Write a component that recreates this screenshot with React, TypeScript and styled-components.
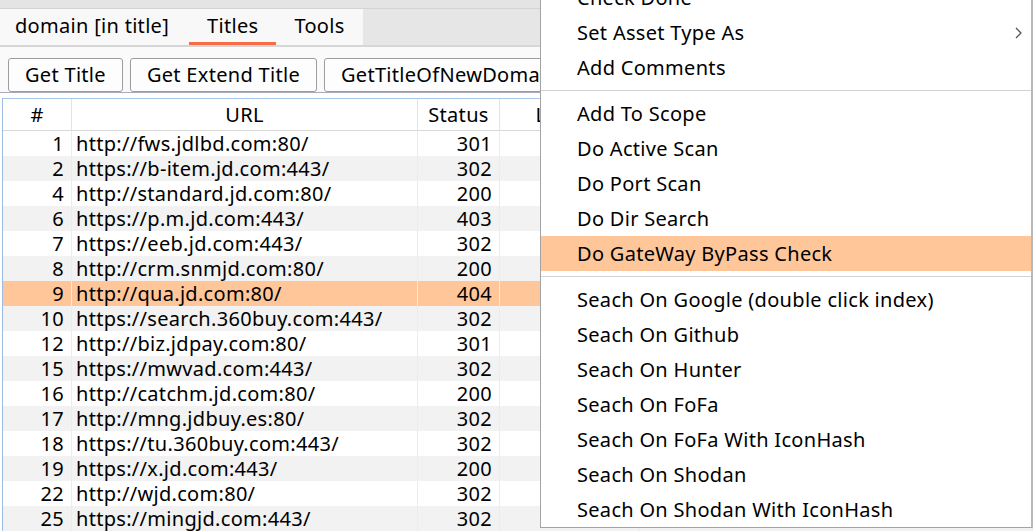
import React from "react";
import styled, { createGlobalStyle } from "styled-components";

const GlobalStyle = createGlobalStyle`
  html, body {
    margin: 0;
    padding: 0;
    overflow: hidden;
    background: #ffffff;
  }
  body {
    font-family: "Noto Sans", "Open Sans", sans-serif;
    color: #000;
  }
`;

const Window = styled.div`
  position: relative;
  width: 1033px;
  height: 531px;
  overflow: hidden;
  background: #ffffff;
  font-size: 20px;
  letter-spacing: 0.3px;
`;

const TopStrip = styled.div`
  height: 8px;
  background: #e4e4e4;
  border-bottom: 1px solid #d3d3d3;
`;

const TabBar = styled.div`
  display: flex;
  height: 36px;
  background: #e6e6e6;
  border-bottom: 2px solid #d6d6d6;
`;

const Tabs = styled.div`
  display: flex;
  background: #f8f8f8;
`;

const Tab = styled.div<{ $active?: boolean; $first?: boolean }>`
  display: flex;
  align-items: center;
  padding-left: ${(p) => (p.$first ? "15px" : "18px")};
  padding-right: ${(p) => (p.$first ? "20px" : "18px")};
  box-sizing: border-box;
  height: 36px;
  border-bottom: 3px solid ${(p) => (p.$active ? "#f76b45" : "transparent")};
  line-height: 1.2;
`;

const Toolbar = styled.div`
  display: flex;
  gap: 7px;
  height: 46px;
  padding: 11px 0 0 8px;
  box-sizing: border-box;
  background: #fafafa;
  border-bottom: 1px solid #aaaabb;
  white-space: nowrap;
`;

const Button = styled.div`
  display: flex;
  align-items: center;
  height: 34px;
  padding: 0 16px;
  box-sizing: border-box;
  background: #fdfdfd;
  border: 1px solid #9d9d9d;
  border-radius: 3px;
  line-height: 1.2;
`;

const TablePane = styled.div`
  padding: 5px 0 0 2px;
  background: #ffffff;
`;

const Table = styled.div`
  border-left: 1px solid #9dbbe0;
`;

const columns = "69px 346px 82px 140px 1fr";

const HeaderRow = styled.div`
  display: grid;
  grid-template-columns: ${columns};
  height: 33px;
  box-sizing: border-box;
  border-top: 1px solid #a9c7ea;
  border-bottom: 1px solid #d8d8d8;
  background: #ffffff;
`;

const HeaderCell = styled.div`
  display: flex;
  align-items: center;
  justify-content: center;
  border-right: 1px solid #e4e4e4;
  line-height: 1.2;
  white-space: nowrap;
`;

const Row = styled.div<{ $shade: "plain" | "alt" | "selected" }>`
  display: grid;
  grid-template-columns: ${columns};
  height: 25px;
  background: ${(p) =>
    p.$shade === "selected" ? "#ffc699" : p.$shade === "alt" ? "#f2f2f2" : "#ffffff"};
  white-space: nowrap;
`;

const Cell = styled.div<{ $align?: "left" | "right" }>`
  display: flex;
  align-items: center;
  justify-content: ${(p) => (p.$align === "right" ? "flex-end" : "flex-start")};
  padding: 1px ${(p) => (p.$align === "right" ? "7px" : "4px")} 0;
  border-right: 1px solid #ececec;
  min-width: 0;
  line-height: 1.2;
`;

const Menu = styled.div`
  position: absolute;
  left: 540px;
  top: -21px;
  width: 493px;
  box-sizing: border-box;
  background: #ffffff;
  border: 1px solid #a3a3a3;
  border-right-width: 2px;
  border-right-color: #b8b8b8;
`;

const MenuItem = styled.div<{ $hover?: boolean }>`
  position: relative;
  display: flex;
  align-items: center;
  height: 35px;
  padding-left: 36px;
  background: ${(p) => (p.$hover ? "#ffc699" : "transparent")};
  line-height: 1.2;
  white-space: nowrap;
`;

const SubArrow = styled.svg`
  position: absolute;
  right: 9px;
  top: 12px;
`;

const Separator = styled.div`
  height: 11px;
  display: flex;
  align-items: center;
  &::after {
    content: "";
    flex: 1;
    height: 1px;
    background: #d3d3d3;
  }
`;

type Item = { label: string; arrow?: boolean; hover?: boolean } | "sep";

const menuItems: Item[] = [
  { label: "Check Done" },
  { label: "Set Asset Type As", arrow: true },
  { label: "Add Comments" },
  "sep",
  { label: "Add To Scope" },
  { label: "Do Active Scan" },
  { label: "Do Port Scan" },
  { label: "Do Dir Search" },
  { label: "Do GateWay ByPass Check", hover: true },
  "sep",
  { label: "Seach On Google (double click index)" },
  { label: "Seach On Github" },
  { label: "Seach On Hunter" },
  { label: "Seach On FoFa" },
  { label: "Seach On FoFa With IconHash" },
  { label: "Seach On Shodan" },
  { label: "Seach On Shodan With IconHash" },
];

const rows: [number, string, number][] = [
  [1, "http://fws.jdlbd.com:80/", 301],
  [2, "https://b-item.jd.com:443/", 302],
  [4, "http://standard.jd.com:80/", 200],
  [6, "https://p.m.jd.com:443/", 403],
  [7, "https://eeb.jd.com:443/", 302],
  [8, "http://crm.snmjd.com:80/", 200],
  [9, "http://qua.jd.com:80/", 404],
  [10, "https://search.360buy.com:443/", 302],
  [12, "http://biz.jdpay.com:80/", 301],
  [15, "https://mwvad.com:443/", 302],
  [16, "http://catchm.jd.com:80/", 200],
  [17, "http://mng.jdbuy.es:80/", 302],
  [18, "https://tu.360buy.com:443/", 302],
  [19, "https://x.jd.com:443/", 200],
  [22, "http://wjd.com:80/", 302],
  [25, "https://mingjd.com:443/", 302],
];

const App: React.FC = () => {
  return (
    <Window>
      <GlobalStyle />
      <TopStrip />
      <TabBar>
        <Tabs>
          <Tab $first>domain [in title]</Tab>
          <Tab $active>Titles</Tab>
          <Tab>Tools</Tab>
        </Tabs>
      </TabBar>
      <Toolbar>
        <Button>Get Title</Button>
        <Button>Get Extend Title</Button>
        <Button>GetTitleOfNewDomain</Button>
      </Toolbar>
      <TablePane>
        <Table>
          <HeaderRow>
            <HeaderCell>#</HeaderCell>
            <HeaderCell>URL</HeaderCell>
            <HeaderCell>Status</HeaderCell>
            <HeaderCell>Length</HeaderCell>
            <HeaderCell />
          </HeaderRow>
          {rows.map(([id, url, status], i) => (
            <Row key={id} $shade={id === 9 ? "selected" : i % 2 ? "alt" : "plain"}>
              <Cell $align="right">{id}</Cell>
              <Cell>{url}</Cell>
              <Cell $align="right">{status}</Cell>
              <Cell />
              <Cell />
            </Row>
          ))}
        </Table>
      </TablePane>
      <Menu>
        {menuItems.map((item, i) =>
          item === "sep" ? (
            <Separator key={i} />
          ) : (
            <MenuItem key={i} $hover={item.hover}>
              {item.label}
              {item.arrow && (
                <SubArrow width="7" height="12" viewBox="0 0 7 12">
                  <path d="M1 1 L6 6 L1 11" fill="none" stroke="#555" strokeWidth="1.3" />
                </SubArrow>
              )}
            </MenuItem>
          )
        )}
      </Menu>
    </Window>
  );
};

export default App;
